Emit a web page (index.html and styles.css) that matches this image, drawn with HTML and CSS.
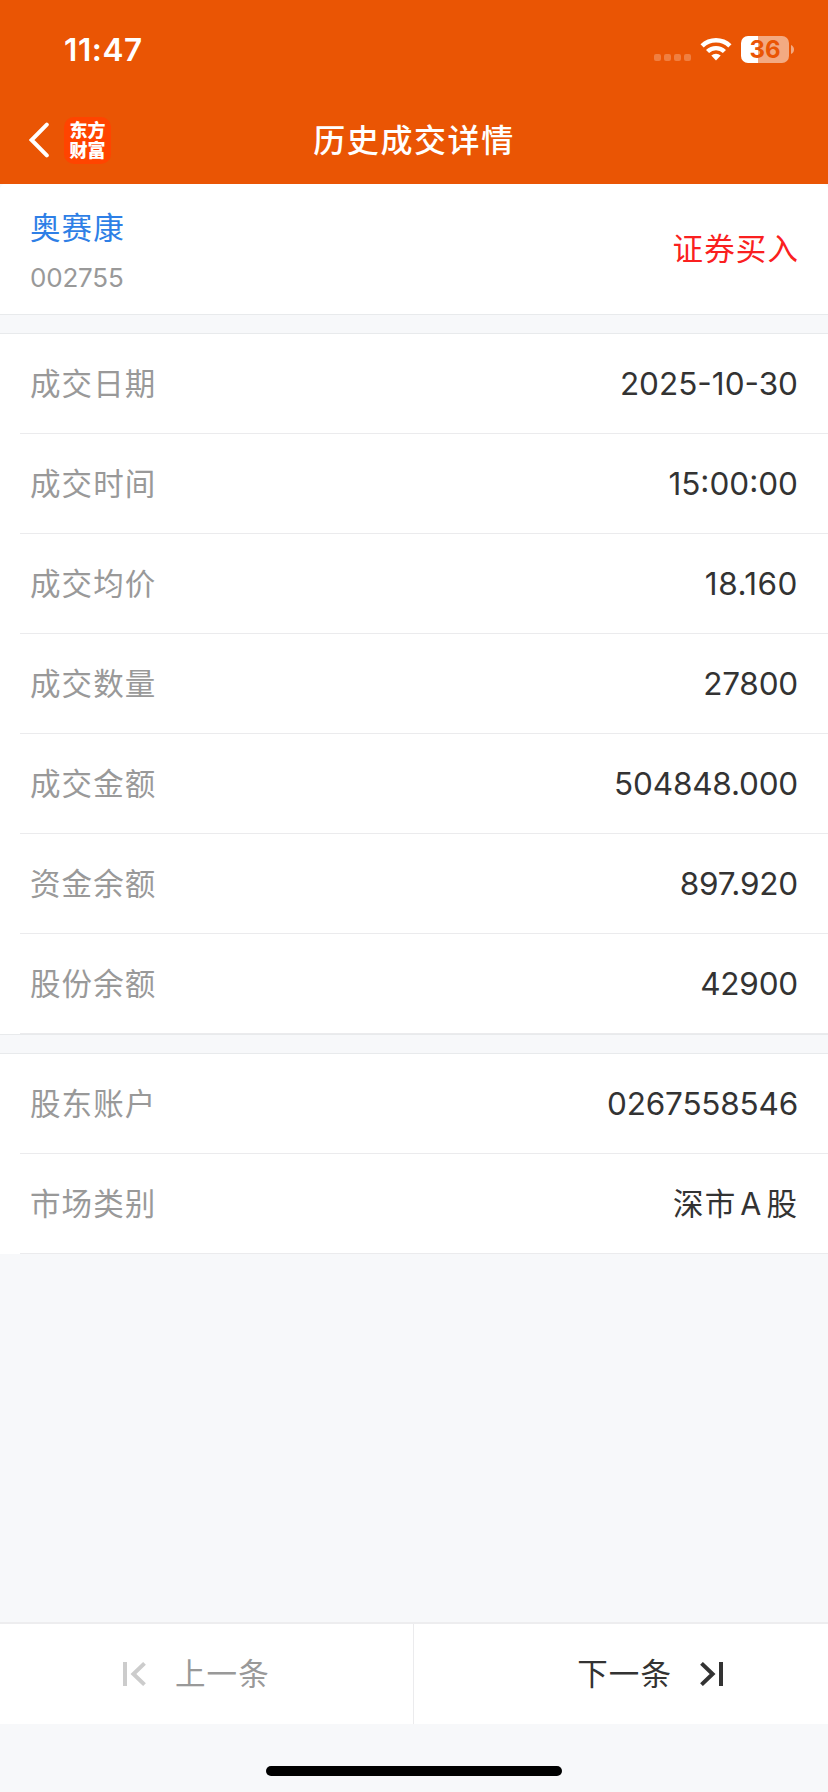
FILE: index.html
```
<!DOCTYPE html>
<html lang="zh-CN">
<head>
    <meta charset="UTF-8">
    <meta name="viewport" content="width=device-width, initial-scale=1.0">
    <title>历史成交详情</title>
    <link rel="stylesheet" href="styles.css">
</head>
<body>

    <header class="header">
        <div class="status-bar">
            <span class="time">11:47</span>
            <div class="status-icons">
                <div class="signal"><i></i><i></i><i></i><i></i></div>
                <svg class="wifi" width="32" height="24" viewBox="0 0 32 24" fill="#fff">
                    <path d="M0.5 7.2 A22.2 22.2 0 0 1 31.5 7.2 L28.3 10.4 A17.6 17.6 0 0 0 3.7 10.4 Z"/>
                    <path d="M6 13 A14.4 14.4 0 0 1 26 13 L22.9 16.1 A10 10 0 0 0 9.1 16.1 Z"/>
                    <path d="M11.3 18.5 A6.9 6.9 0 0 1 20.7 18.5 L16 23.4 Z"/>
                </svg>
                <div class="battery"><span>36</span></div>
                <svg class="battery-tip" width="3" height="9" viewBox="0 0 3 9"><path d="M0 0 Q3 1.5 3 4.5 Q3 7.5 0 9 Z" fill="#f3aa82"/></svg>
            </div>
        </div>
        <div class="nav-bar">
            <div class="nav-left">
                <svg width="20" height="36" viewBox="0 0 20 36" fill="none" stroke="#fff" stroke-width="4" stroke-linecap="round">
                    <path d="M17.8 2.6 L2.6 18 L17.8 33.4"/>
                </svg>
                <div class="logo">
                    <span>东方</span>
                    <span>财富</span>
                </div>
            </div>
            <h1 class="title">历史成交详情</h1>
            <div class="nav-right"></div>
        </div>
    </header>

    <section class="stock">
        <div class="stock-info">
            <div class="stock-name">奥赛康</div>
            <div class="stock-code">002755</div>
        </div>
        <div class="trade-type">证券买入</div>
    </section>

    <section class="group">
        <div class="row"><span class="label">成交日期</span><span class="value">2025-10-30</span></div>
        <div class="row"><span class="label">成交时间</span><span class="value">15:00:00</span></div>
        <div class="row"><span class="label">成交均价</span><span class="value wide">18.160</span></div>
        <div class="row"><span class="label">成交数量</span><span class="value tight">27800</span></div>
        <div class="row"><span class="label">成交金额</span><span class="value tight">504848.000</span></div>
        <div class="row"><span class="label">资金余额</span><span class="value tight">897.920</span></div>
        <div class="row"><span class="label">股份余额</span><span class="value tight">42900</span></div>
    </section>

    <section class="group group-last">
        <div class="row"><span class="label">股东账户</span><span class="value tight">0267558546</span></div>
        <div class="row"><span class="label">市场类别</span><span class="value market">深市<span class="latin">A</span>股</span></div>
    </section>

    <footer class="footer">
        <div class="pager">
            <div class="page-btn prev">
                <svg width="24" height="24" viewBox="0 0 24 24" fill="none" stroke="#ccc" stroke-width="4">
                    <path d="M3 0 V24 M22.5 1.4 L11.4 12 L22.5 22.6"/>
                </svg>
                <span>上一条</span>
            </div>
            <div class="page-btn next">
                <span>下一条</span>
                <svg width="24" height="24" viewBox="0 0 24 24" fill="none" stroke="#333" stroke-width="4">
                    <path d="M21 0 V24 M1.5 1.4 L12.6 12 L1.5 22.6"/>
                </svg>
            </div>
        </div>
        <div class="home-bar"></div>
    </footer>

</body>
</html>
```
FILE: styles.css
```
* {
    box-sizing: border-box;
}
body {
    margin: 0;
    height: 1792px;
    display: flex;
    flex-direction: column;
    font-family: Inter, "Noto Sans CJK SC", sans-serif;
    background-color: #f7f8fa;
    color: #333;
    overflow: hidden;
}
.header {
    height: 184px;
    background-color: #ea5504;
    color: #fff;
}
.status-bar {
    height: 98px;
    padding: 0 34px 0 64px;
    display: flex;
    justify-content: space-between;
    align-items: center;
}
.time {
    font-size: 31.5px;
    font-weight: 600;
    letter-spacing: 0.6px;
    line-height: 40px;
    padding-top: 1px;
}
.status-icons {
    display: flex;
    align-items: center;
}
.signal {
    display: flex;
    gap: 3px;
    margin: 16px 9px 0 0;
}
.signal i {
    width: 7px;
    height: 7px;
    border-radius: 2px;
    background-color: #f07e40;
}
.wifi {
    margin-right: 9px;
}
.battery {
    width: 48px;
    height: 27px;
    border-radius: 7px;
    background: linear-gradient(to right, #fff 17px, #f3aa82 17px);
    color: #ea5504;
    font-size: 24px;
    font-weight: 700;
    line-height: 27px;
    text-align: center;
}
.battery-tip {
    margin-left: 2px;
}
.nav-bar {
    height: 86px;
    display: flex;
    align-items: center;
    padding: 0 29px;
}
.nav-left {
    flex: 1;
    display: flex;
    align-items: center;
    gap: 15px;
    margin-bottom: 2px;
}
.nav-right {
    flex: 1;
}
.logo {
    width: 47px;
    height: 47px;
    padding-bottom: 2px;
    display: flex;
    flex-direction: column;
    align-items: center;
    justify-content: center;
    border-radius: 10px;
    background-color: #ff4400;
    font-family: "Noto Sans CJK SC", sans-serif;
    font-size: 18px;
    font-weight: 900;
    line-height: 20px;
}
.title {
    margin: 0;
    font-size: 32px;
    font-weight: 500;
    letter-spacing: 1.6px;
    line-height: 48px;
}
.stock {
    height: 131px;
    padding: 0 29px 0 30px;
    display: flex;
    justify-content: space-between;
    align-items: center;
    background-color: #fff;
    border-bottom: 1px solid #e8eaec;
    border-radius: 5px 5px 0 0;
}
.stock-info {
    padding-top: 8px;
}
.stock-name {
    color: #2e7fe6;
    font-size: 30.5px;
    letter-spacing: 1.1px;
    line-height: 50px;
}
.stock-code {
    color: #999;
    font-size: 26px;
    letter-spacing: -0.2px;
    line-height: 50px;
}
.trade-type {
    padding-bottom: 5px;
    color: #fa2020;
    font-size: 30.5px;
    letter-spacing: 1.1px;
}
.group {
    margin-top: 18px;
    background-color: #fff;
    border-top: 1px solid #e8eaec;
    border-bottom: 1px solid #e8eaec;
}
.group-last {
    border-bottom: none;
}
.row {
    height: 100px;
    margin-left: 20px;
    padding: 0 30px 0 10px;
    display: flex;
    justify-content: space-between;
    align-items: center;
    border-bottom: 1px solid #ebebed;
}
.label {
    padding-bottom: 4px;
    color: #999;
    font-size: 30.5px;
    letter-spacing: 1.1px;
}
.value {
    font-size: 31.5px;
}
.value.tight {
    letter-spacing: -0.2px;
}
.value.wide {
    letter-spacing: 0.5px;
}
.market {
    padding-bottom: 4px;
    font-size: 30.5px;
    letter-spacing: 1.1px;
}
.latin {
    margin: 0 4px;
}
.footer {
    margin-top: auto;
    height: 170px;
}
.pager {
    height: 102px;
    display: flex;
    background-color: #fff;
    border-top: 2px solid #ededef;
}
.page-btn {
    width: 50%;
    display: flex;
    align-items: center;
    font-size: 30.5px;
    letter-spacing: 1.1px;
}
.page-btn span {
    padding-bottom: 4px;
}
.prev {
    padding-left: 122px;
    gap: 29px;
    color: #999;
    border-right: 1px solid #ebebed;
}
.next {
    justify-content: flex-end;
    padding-right: 104px;
    gap: 28px;
}
.home-bar {
    width: 296px;
    height: 10px;
    margin: 42px auto 0;
    border-radius: 5px;
    background-color: #000;
}
```
